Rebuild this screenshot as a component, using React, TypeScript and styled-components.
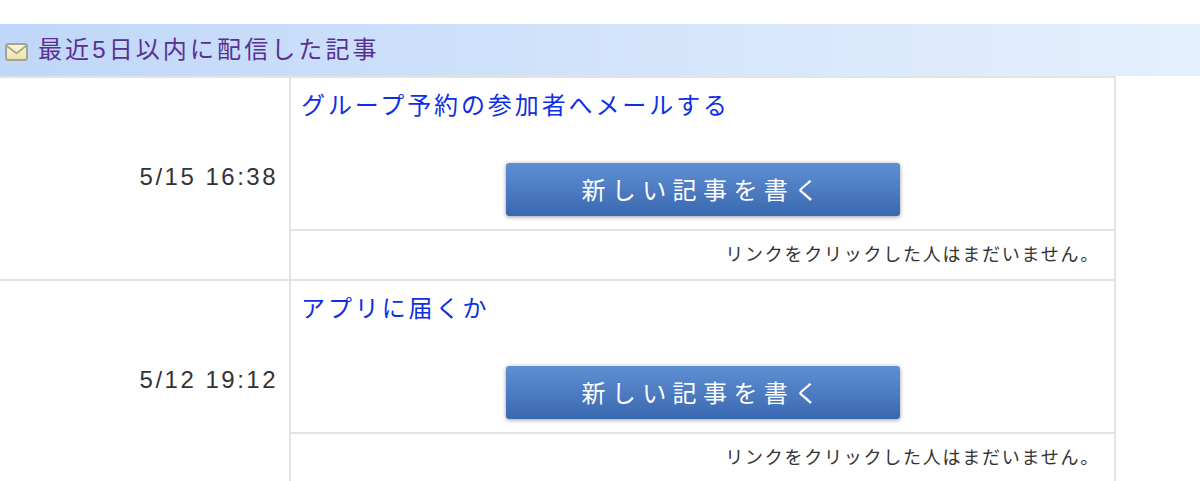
import styled, { createGlobalStyle } from 'styled-components';

const GlobalStyle = createGlobalStyle`
  html, body {
    margin: 0;
    padding: 0;
    height: 481px;
    overflow: hidden;
    background: #fff;
    font-family: "Liberation Sans", "Noto Sans CJK JP", sans-serif;
  }
`;

const Page = styled.div`
  padding-top: 24px;
  width: 1200px;
`;

const Heading = styled.h2`
  display: flex;
  align-items: center;
  gap: 10px;
  height: 52px;
  margin: 0;
  padding: 0 0 5px 5px;
  box-sizing: border-box;
  background: linear-gradient(90deg, #bfd7f8 0%, #e5f0fe 100%);
  color: #5a3092;
  font-size: 24px;
  font-weight: 400;
  letter-spacing: 3.1px;
`;

const MailSvg = styled.svg`
  flex: none;
  margin-top: 9px;
`;

const ArticleList = styled.div`
  width: 1116px;
  border-right: 2px solid #e3e3e3;
  box-sizing: border-box;
`;

const ArticleRow = styled.div`
  display: grid;
  grid-template-columns: 291px 1fr;
  height: 203px;
  border-top: 2px solid #e3e3e3;
  box-sizing: border-box;
`;

const DateCell = styled.div`
  display: flex;
  align-items: center;
  justify-content: flex-end;
  padding: 0 11px 4px 0;
  color: #333;
  font-size: 24px;
  letter-spacing: 2.5px;
  border-right: 2px solid #e3e3e3;
`;

const Body = styled.div`
  display: flex;
  flex-direction: column;
`;

const Main = styled.div`
  height: 153px;
  box-sizing: border-box;
  padding: 10px 10px 0;
  border-bottom: 2px solid #e3e3e3;
`;

const Title = styled.a`
  display: block;
  height: 75px;
  color: #0f2fe6;
  font-size: 24px;
  line-height: 36px;
  letter-spacing: 2.9px;
`;

const WriteButton = styled.button`
  display: block;
  width: 394px;
  height: 53px;
  margin: 0 0 0 205px;
  padding: 0 0 2px;
  border: 0;
  border-radius: 3px;
  background: linear-gradient(180deg, #5f8fd3 0%, #3a68b0 100%);
  box-shadow: 0 1px 4px rgba(0, 0, 0, 0.4);
  color: #fff;
  font-family: inherit;
  font-size: 24px;
  letter-spacing: 6.4px;
`;

const ClickNote = styled.div`
  padding: 12px 14px 0 0;
  text-align: right;
  color: #333;
  font-size: 18px;
  line-height: 24px;
  letter-spacing: 1.75px;
`;

const MailIcon = () => (
  <MailSvg width="23" height="18" viewBox="0 0 23 18">
    <defs>
      <linearGradient id="mail" x1="0" y1="0" x2="0" y2="1">
        <stop offset="0" stopColor="#fbf8d2" />
        <stop offset="1" stopColor="#e9e3ac" />
      </linearGradient>
    </defs>
    <rect x="1" y="1" width="21" height="16" rx="2.5" fill="url(#mail)" stroke="#a5a48f" strokeWidth="2" />
    <path d="M2 3 L11.5 10.5 L21 3" fill="none" stroke="#a5a48f" strokeWidth="1.6" />
  </MailSvg>
);

const articles = [
  { date: '5/15 16:38', title: 'グループ予約の参加者へメールする' },
  { date: '5/12 19:12', title: 'アプリに届くか' },
];

export default function App() {
  return (
    <Page>
      <GlobalStyle />
      <Heading>
        <MailIcon />
        最近5日以内に配信した記事
      </Heading>
      <ArticleList>
        {articles.map((article) => (
          <ArticleRow key={article.date}>
            <DateCell>{article.date}</DateCell>
            <Body>
              <Main>
                <Title>{article.title}</Title>
                <WriteButton>新しい記事を書く</WriteButton>
              </Main>
              <ClickNote>リンクをクリックした人はまだいません。</ClickNote>
            </Body>
          </ArticleRow>
        ))}
      </ArticleList>
    </Page>
  );
}
